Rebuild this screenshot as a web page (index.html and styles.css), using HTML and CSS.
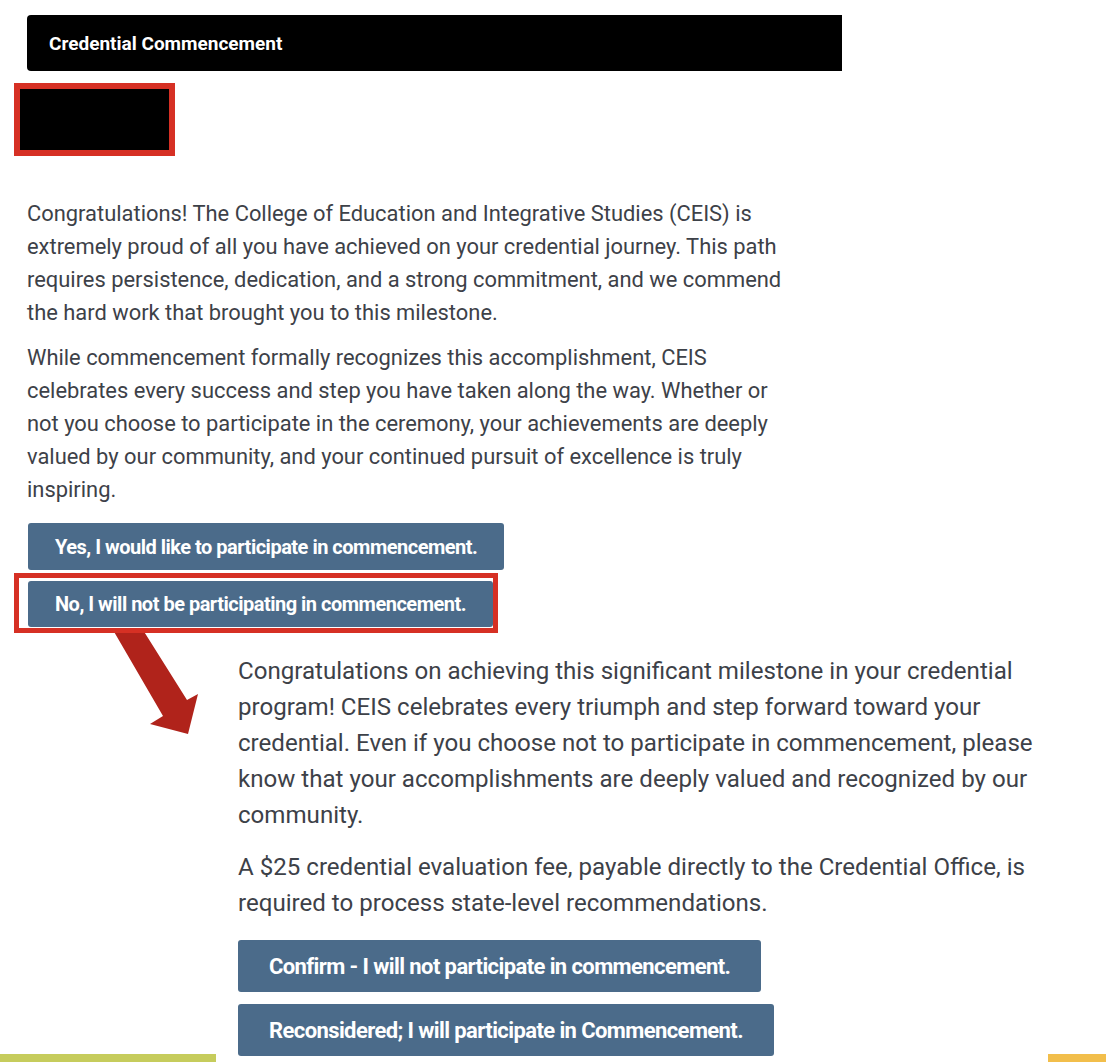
FILE: index.html
```html
<!DOCTYPE html>
<html lang="en">
<head>
<meta charset="utf-8">
<title>Credential Commencement</title>
<link rel="stylesheet" href="styles.css">
</head>
<body>
<div class="page">
  <header class="title-bar">
    <h1 class="title">Credential Commencement</h1>
  </header>

  <div class="logo-mark"><div class="logo-fill"></div></div>

  <section class="intro">
    <p>Congratulations! The College of Education and Integrative Studies (CEIS) is extremely proud of all you have achieved on your credential journey. This path requires persistence, dedication, and a strong commitment, and we commend the hard work that brought you to this milestone.</p>
    <p>While commencement formally recognizes this accomplishment, CEIS celebrates every success and step you have taken along the way. Whether or not you choose to participate in the ceremony, your achievements are deeply valued by our community, and your continued pursuit of excellence is truly inspiring.</p>
    <div class="choices">
      <button class="btn btn-yes" type="button">Yes, I would like to participate in commencement.</button>
      <div class="highlight">
        <button class="btn btn-no" type="button">No, I will not be participating in commencement.</button>
      </div>
    </div>
  </section>

  <svg class="pointer" width="110" height="120" viewBox="0 0 110 120" aria-hidden="true">
    <polygon points="13,0 43,0 87,70 98,64 88,104 50,94 63,86" fill="#b0231b"/>
  </svg>

  <section class="followup">
    <p>Congratulations on achieving this significant milestone in your credential program! CEIS celebrates every triumph and step forward toward your credential. Even if you choose not to participate in commencement, please know that your accomplishments are deeply valued and recognized by our community.</p>
    <p>A $25 credential evaluation fee, payable directly to the Credential Office, is required to process state-level recommendations.</p>
    <div class="choices choices-lg">
      <button class="btn btn-lg" type="button">Confirm - I will not participate in commencement.</button>
      <button class="btn btn-lg" type="button">Reconsidered; I will participate in Commencement.</button>
    </div>
  </section>
</div>

<footer class="stripes">
  <span class="stripe stripe-green"></span>
  <span class="stripe stripe-gold"></span>
</footer>
</body>
</html>
```

FILE: styles.css
```css
* {
  box-sizing: border-box;
}

html, body {
  margin: 0;
  padding: 0;
  background: #ffffff;
}

body {
  font-family: Roboto, "Noto Sans", "Liberation Sans", sans-serif;
  color: #3d4148;
  height: 1062px;
  overflow: hidden;
  position: relative;
}

.page {
  position: relative;
  padding: 15px 0 0 27px;
}

/* Section heading bar */
.title-bar {
  width: 815px;
  height: 56px;
  background: #000000;
  border-radius: 4px 0 0 4px;
  display: flex;
  align-items: center;
  padding-left: 22px;
}

.title {
  margin: 0;
  font-size: 19px;
  font-weight: 700;
  color: #ffffff;
}

/* Program mark */
.logo-mark {
  margin: 12px 0 0 -13px;
  width: 161px;
  height: 73px;
  border: 6px solid #d63024;
  background: #000000;
}

.intro p {
  margin: 0;
  width: 765px;
  font-size: 21.9px;
  line-height: 33px;
}

.intro p:first-child {
  margin-top: 41px;
}

.intro p + p {
  margin-top: 12px;
}

.choices {
  display: flex;
  flex-direction: column;
  align-items: flex-start;
  gap: 11px;
  margin-top: 17px;
  margin-left: 1px;
}

.btn {
  font-family: Roboto, "Noto Sans", sans-serif;
  font-weight: 700;
  color: #ffffff;
  background: #4b6b8a;
  border: 0;
  border-radius: 3px;
  font-size: 20px;
  letter-spacing: -0.5px;
  padding: 0 27px;
  cursor: pointer;
  white-space: nowrap;
}

.btn-yes {
  height: 47px;
}

.btn-no {
  height: 46px;
}

.highlight {
  position: relative;
}

/* Outline drawn round the selected option, above the pointer */
.highlight::after {
  content: "";
  position: absolute;
  z-index: 2;
  top: -8px;
  left: -14px;
  right: -5px;
  bottom: -6px;
  border: 5px solid #d63024;
  pointer-events: none;
}

.pointer {
  position: absolute;
  z-index: 1;
  left: 100px;
  top: 630px;
}

.followup {
  margin: 26px 0 0 211px;
}

.followup p {
  margin: 0;
  width: 820px;
  font-size: 24.1px;
  line-height: 36px;
}

.followup p + p {
  margin-top: 16px;
}

.choices-lg {
  margin: 19px 0 0;
  gap: 12px;
}

.btn-lg {
  height: 52px;
  font-size: 22px;
  letter-spacing: -0.6px;
  padding: 0 31px;
}

/* Brand colour stripes along the foot of the page */
.stripes {
  position: absolute;
  left: 0;
  right: 0;
  bottom: 0;
  height: 8px;
  display: flex;
  justify-content: space-between;
}

.stripe-green {
  width: 216px;
  background: #c6cc5c;
}

.stripe-gold {
  width: 58px;
  background: #f2be4b;
}
```
